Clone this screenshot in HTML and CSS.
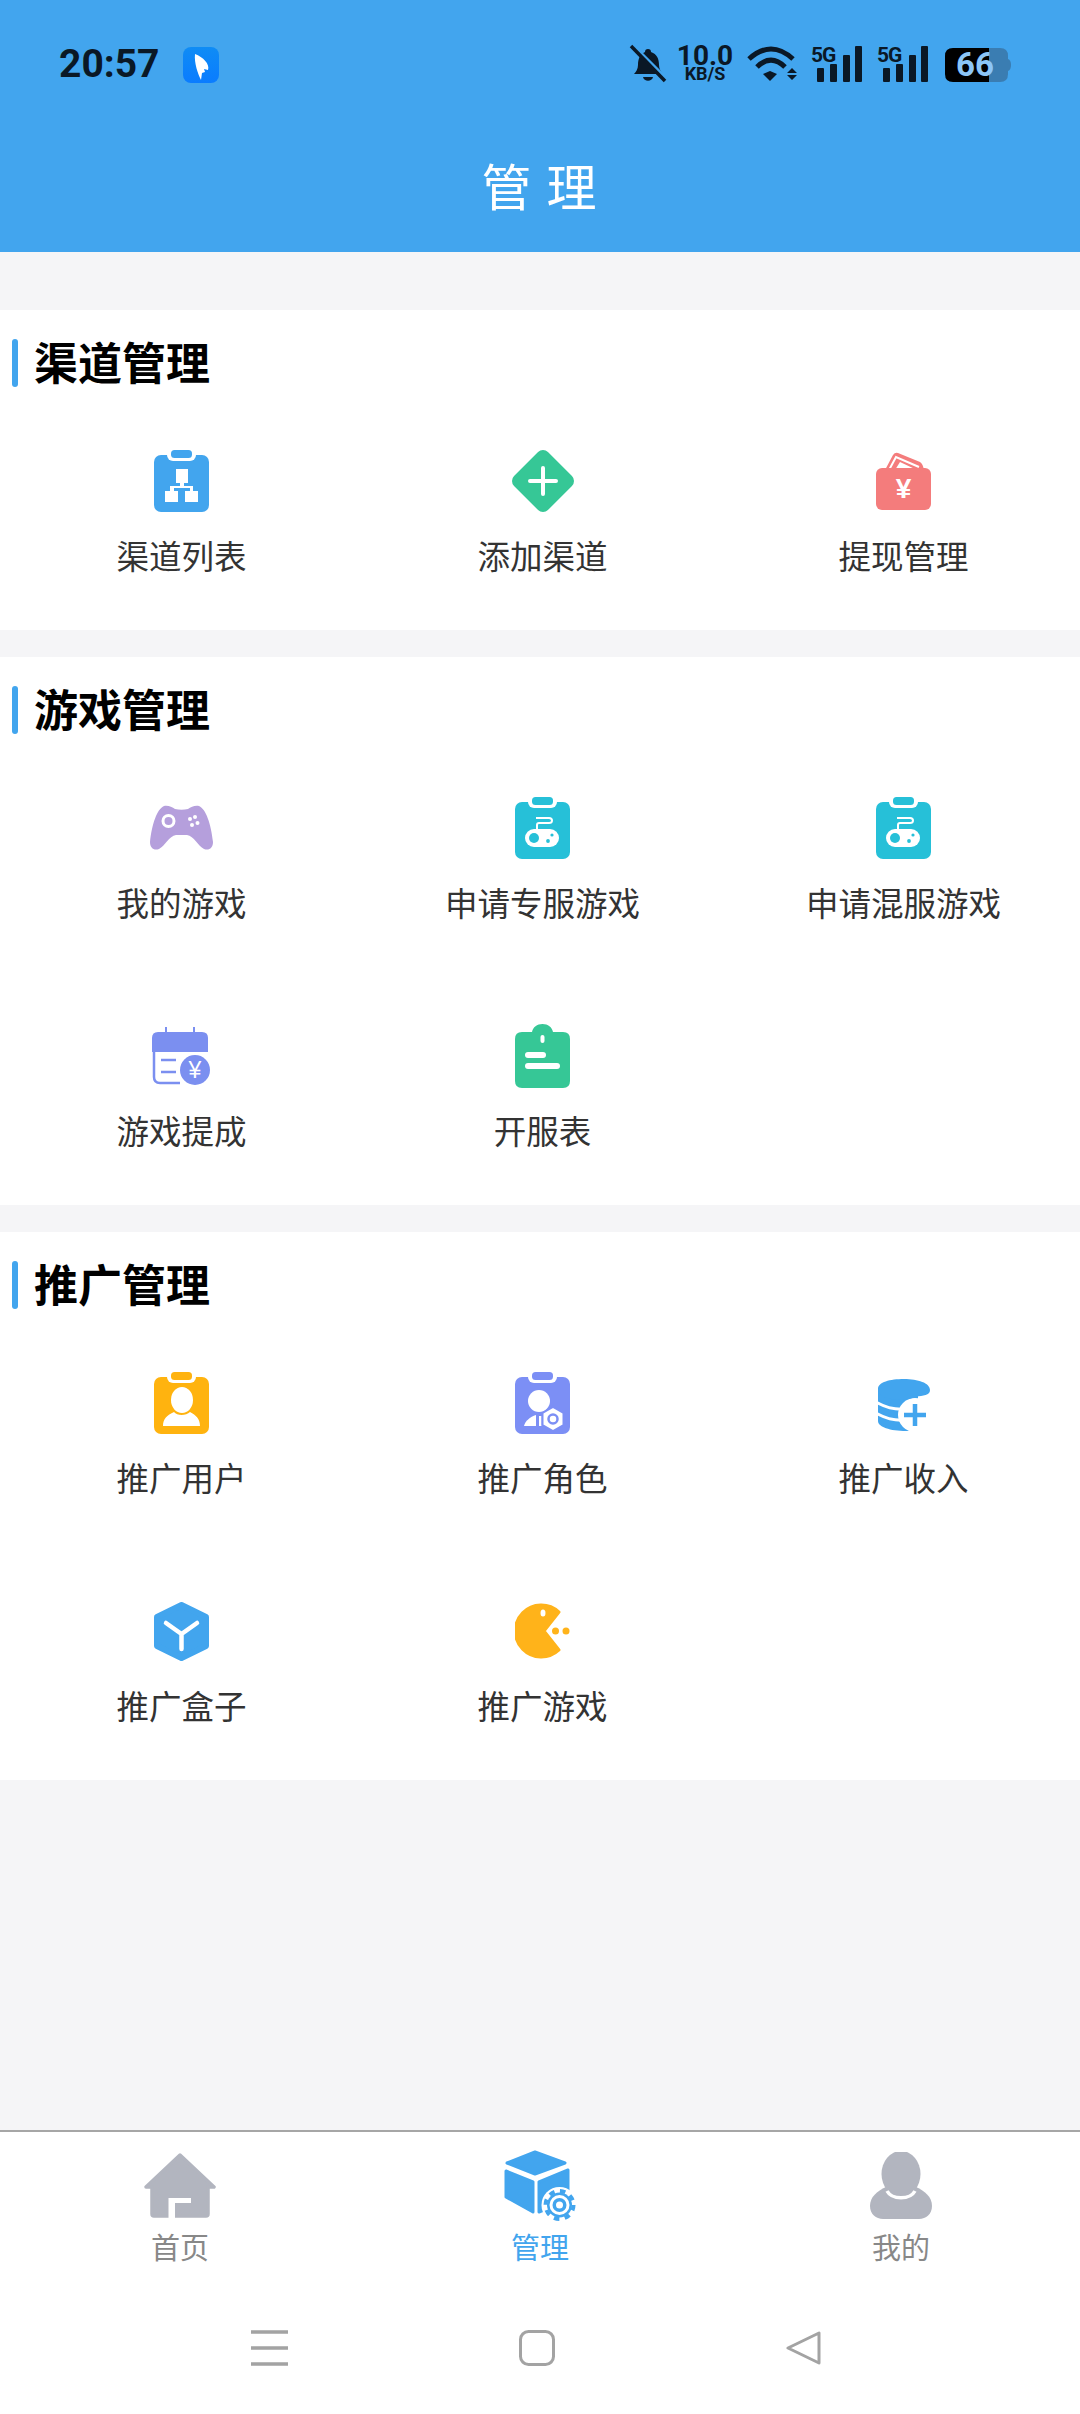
FILE: index.html
```html
<!DOCTYPE html>
<html lang="zh-CN">
<head>
    <meta charset="UTF-8">
    <meta name="viewport" content="width=device-width, initial-scale=1.0">
    <title>管理</title>
    <link rel="stylesheet" href="styles.css">
</head>
<body>
    <svg class="defs" width="0" height="0">
        <symbol id="clip" viewBox="0 0 55 62">
            <rect x="0" y="5" width="55" height="57" rx="7" fill="currentColor"/>
            <rect x="13" y="-3" width="29" height="14" rx="6" fill="#fff"/>
            <rect x="17" y="0" width="21" height="8" rx="3.5" fill="currentColor"/>
        </symbol>
        <symbol id="clip-pad" viewBox="0 0 55 62">
            <use href="#clip" width="55" height="62"/>
            <rect x="10" y="32" width="34" height="18" rx="9" fill="#fff"/>
            <circle cx="19" cy="41" r="5" fill="currentColor"/>
            <circle cx="37" cy="38" r="1.6" fill="currentColor"/>
            <circle cx="33" cy="44" r="1.9" fill="currentColor"/>
            <path d="M22 33V28Q22 26 24 26H34Q37 26 37 23.5Q37 21 34 21H21" fill="none" stroke="#fff" stroke-width="2"/>
        </symbol>
        <symbol id="bars" viewBox="0 0 51 37">
            <rect x="6" y="22" width="7" height="14" rx="1"/>
            <rect x="19" y="18" width="7" height="18" rx="1"/>
            <rect x="32" y="9" width="7" height="27" rx="1"/>
            <rect x="44" y="0" width="7" height="36" rx="1"/>
        </symbol>
    </svg>

    <header class="header">
        <div class="status">
            <div class="status-left">
                <span class="time">20:57</span>
                <svg class="app-icon" width="36" height="36" viewBox="0 0 36 36">
                    <defs>
                        <linearGradient id="appBlue" x1="0" y1="0" x2="0" y2="1">
                            <stop offset="0" stop-color="#0f8cf5"/>
                            <stop offset="1" stop-color="#0a7cff"/>
                        </linearGradient>
                    </defs>
                    <rect width="36" height="36" rx="8" fill="url(#appBlue)"/>
                    <path d="M12 7C20 10 27 17 25 23L21 22L22 25L19 26L18 33C15 27 11 16 12 7Z" fill="#fff"/>
                </svg>
            </div>
            <div class="status-right">
                <svg class="st-bell" width="36" height="36" viewBox="0 0 36 36">
                    <path d="M18 3C20 3 21 4 21 6C27 8 29 13 29 19C29 23 31 26 33 28H4C6 26 8 23 8 19C8 13 10 8 15 6C15 4 16 3 18 3Z" fill="#0a1826"/>
                    <path d="M13 31H23C22 36 14 36 13 31Z" fill="#0a1826"/>
                    <path d="M3 -1L38 34" stroke="#42a5ee" stroke-width="3"/>
                    <path d="M1 0L35 35" stroke="#0a1826" stroke-width="3.5"/>
                </svg>
                <div class="st-net">
                    <span class="net-num">10.0</span>
                    <span class="net-unit">KB/S</span>
                </div>
                <svg class="st-wifi" width="50" height="36" viewBox="0 0 50 36">
                    <g fill="none" stroke="#0a1826" stroke-width="5">
                        <path d="M2 13Q24 -7 46 13"/>
                        <path d="M10 21Q24 7 38 21"/>
                    </g>
                    <path d="M16 28L23 25L30 28L23 35Z" fill="#0a1826"/>
                    <path d="M40 27L45 22L50 27ZM40 29H50L45 34Z" fill="#0a1826"/>
                </svg>
                <svg class="st-sig" width="51" height="37">
                    <text x="0" y="16" class="sig-text">5G</text>
                    <use href="#bars" width="51" height="37"/>
                </svg>
                <svg class="st-sig2" width="51" height="37">
                    <text x="0" y="16" class="sig-text">5G</text>
                    <use href="#bars" width="51" height="37"/>
                </svg>
                <svg class="st-batt" width="66" height="34" viewBox="0 0 66 34">
                    <path d="M40 0H55Q63 0 63 8V26Q63 34 55 34H40Z" fill="#3a7db2"/>
                    <path d="M63 11Q66 12 66 17Q66 22 63 23Z" fill="#3a7db2"/>
                    <path d="M8 0H44V34H8Q0 34 0 26V8Q0 0 8 0Z" fill="#000"/>
                    <text x="30" y="28" class="batt-text">66</text>
                </svg>
            </div>
        </div>
        <h1 class="title">管理</h1>
    </header>

    <main class="main">
        <!-- 渠道管理 -->
        <section class="section first">
            <h2 class="section-head">渠道管理</h2>
            <div class="grid">
                <a class="item">
                    <span class="slot">
                        <svg class="c-blue" width="55" height="62"><use href="#clip" width="55" height="62"/>
                            <path d="M22 19H34V33H30V36H39V41H44V52H31V41H36V38H20V41H24V52H11V41H16V36H26V33H22Z" fill="#fff"/>
                        </svg>
                    </span>
                    <span class="label">渠道列表</span>
                </a>
                <a class="item">
                    <span class="slot">
                        <svg width="62" height="62" viewBox="0 0 62 62">
                            <path d="M31 7L55 31L31 55L7 31Z" fill="#36c796" stroke="#36c796" stroke-width="14" stroke-linejoin="round"/>
                            <path d="M31 18V44M18 31H44" stroke="#fff" stroke-width="4" stroke-linecap="round"/>
                        </svg>
                    </span>
                    <span class="label">添加渠道</span>
                </a>
                <a class="item">
                    <span class="slot">
                        <svg width="55" height="58" viewBox="0 0 55 58">
                            <path d="M9 18L17 3Q19 0 22 1L44 10Q47 12 48 18Z" fill="#f47c7c"/>
                            <path d="M13 18L20 5L43 15" fill="none" stroke="#fff" stroke-width="2"/>
                            <path d="M19 18L24 10L41 18Z" fill="#fff"/>
                            <rect x="0" y="16" width="55" height="42" rx="6" fill="#f47c7c"/>
                            <text x="27.5" y="46" class="yen">¥</text>
                        </svg>
                    </span>
                    <span class="label">提现管理</span>
                </a>
            </div>
        </section>

        <!-- 游戏管理 -->
        <section class="section">
            <h2 class="section-head">游戏管理</h2>
            <div class="grid">
                <a class="item">
                    <span class="slot">
                        <svg width="63" height="46" viewBox="0 0 63 46">
                            <path d="M14 1C18 0 22 2 25 4C29 5 34 5 38 4C41 2 45 0 49 1C56 4 61 19 63 37C63 43 59 46 54 44C48 41 44 31 37 30H26C19 31 15 41 9 44C4 46 0 43 0 37C2 19 7 4 14 1Z" fill="#b59fdc"/>
                            <circle cx="18.5" cy="16" r="5.5" fill="none" stroke="#fff" stroke-width="3"/>
                            <circle cx="40" cy="14" r="2" fill="#fff"/>
                            <circle cx="45" cy="12" r="2" fill="#fff"/>
                            <circle cx="42" cy="20" r="2" fill="#fff"/>
                            <circle cx="47.5" cy="18" r="2" fill="#fff"/>
                        </svg>
                    </span>
                    <span class="label">我的游戏</span>
                </a>
                <a class="item">
                    <span class="slot"><svg class="c-teal" width="55" height="62"><use href="#clip-pad" width="55" height="62"/></svg></span>
                    <span class="label">申请专服游戏</span>
                </a>
                <a class="item">
                    <span class="slot"><svg class="c-teal" width="55" height="62"><use href="#clip-pad" width="55" height="62"/></svg></span>
                    <span class="label">申请混服游戏</span>
                </a>
                <a class="item">
                    <span class="slot">
                        <svg width="60" height="58" viewBox="0 0 60 58">
                            <path d="M14 0V6M42 0V6" stroke="#7b8ff0" stroke-width="2"/>
                            <path d="M6 5H50Q56 5 56 11V25H0V11Q0 5 6 5Z" fill="#7b8ff0"/>
                            <path d="M2 25V50Q2 56 8 56H28" fill="none" stroke="#7b8ff0" stroke-width="2.5"/>
                            <path d="M9 33H24M9 45H24" stroke="#7b8ff0" stroke-width="2.5"/>
                            <circle cx="43" cy="43" r="15" fill="#7b8ff0"/>
                            <text x="43" y="51" class="yen small">¥</text>
                        </svg>
                    </span>
                    <span class="label">游戏提成</span>
                </a>
                <a class="item">
                    <span class="slot">
                        <svg width="55" height="64" viewBox="0 0 55 64">
                            <path d="M7 8H17C18 3 22 0 27.5 0C33 0 37 3 38 8H48Q55 8 55 15V57Q55 64 48 64H7Q0 64 0 57V15Q0 8 7 8Z" fill="#36c796"/>
                            <rect x="25.5" y="11" width="4" height="8" rx="2" fill="#fff"/>
                            <rect x="10" y="28" width="21" height="6" rx="3" fill="#fff"/>
                            <rect x="10" y="39" width="35" height="6" rx="3" fill="#fff"/>
                        </svg>
                    </span>
                    <span class="label">开服表</span>
                </a>
            </div>
        </section>

        <!-- 推广管理 -->
        <section class="section">
            <h2 class="section-head">推广管理</h2>
            <div class="grid">
                <a class="item">
                    <span class="slot">
                        <svg class="c-orange" width="55" height="62"><use href="#clip" width="55" height="62"/>
                            <ellipse cx="28" cy="28" rx="11" ry="13" fill="#fff"/>
                            <path d="M9 54C9 47 13 43 20 40C23 44 32 44 36 40C42 43 46 47 46 54Z" fill="#fff"/>
                        </svg>
                    </span>
                    <span class="label">推广用户</span>
                </a>
                <a class="item">
                    <span class="slot">
                        <svg class="c-purple" width="55" height="62"><use href="#clip" width="55" height="62"/>
                            <circle cx="24" cy="29" r="11" fill="#fff"/>
                            <path d="M9 54C10 49 15 45 21 43V54Z" fill="#fff"/>
                            <rect x="24" y="44" width="2.5" height="10" fill="#fff"/>
                            <path d="M38 35L48.5 41V53L38 59L27.5 53V41Z" fill="#fff" stroke="#7c8ff5" stroke-width="2"/>
                            <circle cx="38" cy="47" r="4.5" fill="#fff" stroke="#7c8ff5" stroke-width="2.5"/>
                        </svg>
                    </span>
                    <span class="label">推广角色</span>
                </a>
                <a class="item">
                    <span class="slot">
                        <svg width="52" height="56" viewBox="0 -4 52 56">
                            <path d="M0 10V42C0 48 12 52 28 52H40V10Z" fill="#42a5ee"/>
                            <path d="M-2 23Q18 35 42 27M-2 34Q18 46 42 38" fill="none" stroke="#fff" stroke-width="3"/>
                            <circle cx="37" cy="36" r="17" fill="#fff"/>
                            <path d="M0 10C0 3 12 0 26 0C40 0 52 4 52 11C52 17 45 16 38 18C32 20 28 21 24 21C10 21 0 17 0 10Z" fill="#42a5ee"/>
                            <path d="M37 25V47M26 36H48" stroke="#42a5ee" stroke-width="4.5"/>
                        </svg>
                    </span>
                    <span class="label">推广收入</span>
                </a>
                <a class="item">
                    <span class="slot">
                        <svg width="55" height="59" viewBox="0 0 55 59">
                            <path d="M27.5 3L52 15V44L27.5 56L3 44V15Z" fill="#42a5ee" stroke="#42a5ee" stroke-width="6" stroke-linejoin="round"/>
                            <path d="M12 21L27.5 32L43 21M27.5 32V47" fill="none" stroke="#fff" stroke-width="4.5" stroke-linecap="round" stroke-linejoin="round"/>
                        </svg>
                    </span>
                    <span class="label">推广盒子</span>
                </a>
                <a class="item">
                    <span class="slot">
                        <svg width="56" height="56" viewBox="0 0 56 56">
                            <path d="M29 28L44 9A26 26 0 1 0 44 47Z" fill="#ffb31a" stroke="#ffb31a" stroke-width="3" stroke-linejoin="round"/>
                            <ellipse cx="28" cy="10" rx="2.5" ry="3.5" fill="#fff"/>
                            <circle cx="40.5" cy="28" r="3.5" fill="#ffb31a"/>
                            <circle cx="51" cy="28" r="3.5" fill="#ffb31a"/>
                        </svg>
                    </span>
                    <span class="label">推广游戏</span>
                </a>
            </div>
        </section>
    </main>

    <nav class="tabbar">
        <a class="tab">
            <span class="tab-slot">
                <svg width="72" height="65" viewBox="0 0 72 65">
                    <path d="M36 2L70 34H64V61Q64 63 62 63H10Q8 63 8 61V34H2Z" fill="#b2b5bf" stroke="#b2b5bf" stroke-width="3.5" stroke-linejoin="round"/>
                    <path d="M24.5 65V45H47V50H31V65Z" fill="#fff"/>
                </svg>
            </span>
            <span class="tab-label">首页</span>
        </a>
        <a class="tab active">
            <span class="tab-slot">
                <svg width="74" height="71" viewBox="0 0 74 71">
                    <g fill="#42a5ee" stroke="#42a5ee" stroke-width="3" stroke-linejoin="round">
                        <path d="M4 13L32 2L62 13L32 24Z"/>
                        <path d="M3 21L30 32V62L3 47Z"/>
                        <path d="M36 32L65 20V50L36 62Z"/>
                    </g>
                    <circle cx="56.5" cy="55" r="18" fill="#fff"/>
                    <circle cx="56.5" cy="55" r="12.5" fill="#42a5ee"/>
                    <circle cx="56.5" cy="55" r="14" fill="none" stroke="#42a5ee" stroke-width="4" stroke-dasharray="5.5 5.5"/>
                    <circle cx="56.5" cy="55" r="10" fill="#fff"/>
                    <circle cx="56.5" cy="55" r="7" fill="#42a5ee"/>
                    <circle cx="56.5" cy="55" r="3.5" fill="#fff"/>
                </svg>
            </span>
            <span class="tab-label">管理</span>
        </a>
        <a class="tab">
            <span class="tab-slot">
                <svg width="62" height="67" viewBox="0 0 62 67">
                    <path d="M0 54C0 45 7 39 16 35H46C55 39 62 45 62 54C62 62 56 67 49 67H13C6 67 0 62 0 54Z" fill="#b2b5bf"/>
                    <ellipse cx="31" cy="22" rx="19.5" ry="23" fill="#b2b5bf"/>
                    <path d="M17 39C22 48 40 48 45 39" fill="none" stroke="#fff" stroke-width="3.5"/>
                </svg>
            </span>
            <span class="tab-label">我的</span>
        </a>
    </nav>

    <div class="navbar">
        <svg width="37" height="36" viewBox="0 0 37 36">
            <path d="M0 2H37M0 18H37M0 34H37" stroke="#a3a3a3" stroke-width="3.5"/>
        </svg>
        <svg width="36" height="36" viewBox="0 0 36 36">
            <rect x="1.5" y="1.5" width="33" height="33" rx="8" fill="none" stroke="#a3a3a3" stroke-width="3"/>
        </svg>
        <svg width="35" height="36" viewBox="0 0 35 36">
            <path d="M33 3V33L2 18Z" fill="none" stroke="#a3a3a3" stroke-width="3" stroke-linejoin="round"/>
        </svg>
    </div>
</body>
</html>
```

FILE: styles.css
```css
* {
    box-sizing: border-box;
}
html, body {
    margin: 0;
    padding: 0;
}
body {
    width: 1080px;
    height: 2414px;
    display: flex;
    flex-direction: column;
    overflow: hidden;
    background: #fff;
    font-family: "Noto Sans CJK SC", "Noto Sans", sans-serif;
}
.defs {
    position: absolute;
}

/* header */
.header {
    height: 252px;
    background: #42a5ee;
    flex: none;
}
.status {
    height: 152px;
    padding: 46px 69px 0 59px;
    display: flex;
    justify-content: space-between;
    align-items: flex-start;
    color: #0a1826;
}
.status-left {
    display: flex;
    align-items: center;
    height: 37px;
}
.time {
    font-family: Roboto, sans-serif;
    font-weight: 700;
    font-size: 39px;
    line-height: 37px;
}
.app-icon {
    margin-left: 23px;
    margin-top: 1px;
}
.status-right {
    display: flex;
    align-items: flex-start;
    fill: #0a1826;
}
.status-right svg {
    overflow: visible;
}
.st-net {
    margin-left: 12px;
    width: 54px;
    display: flex;
    flex-direction: column;
    align-items: center;
    font-family: Roboto, sans-serif;
    font-weight: 700;
}
.net-num {
    font-size: 28px;
    line-height: 20px;
}
.net-unit {
    font-size: 18px;
    line-height: 15px;
}
.st-wifi {
    margin-left: 15px;
}
.st-sig {
    margin-left: 14px;
}
.st-sig2 {
    margin-left: 15px;
}
.st-batt {
    margin-left: 17px;
    margin-top: 2px;
}
.sig-text {
    font-family: Roboto, sans-serif;
    font-weight: 700;
    font-size: 21px;
    letter-spacing: -1px;
}
.batt-text {
    font-family: Roboto, sans-serif;
    font-weight: 700;
    font-size: 33px;
    fill: #8cc6f7;
    text-anchor: middle;
}
.title {
    margin: 0;
    text-align: center;
    color: #fff;
    font-weight: 400;
    font-size: 50px;
    line-height: 64px;
    letter-spacing: 15px;
    text-indent: 13px;
}

/* sections */
.main {
    flex: 1;
    background: #f5f5f7;
    padding-top: 58px;
}
.section {
    background: #fff;
    margin-top: 27px;
    overflow: hidden;
}
.section.first {
    margin-top: 0;
}
.section-head {
    margin: 0;
    height: 92px;
    padding: 29px 0 0 12px;
    display: flex;
    gap: 16px;
    font-size: 44px;
    line-height: 44px;
    font-weight: 700;
    color: #000;
}
.section-head::before {
    content: "";
    width: 6px;
    height: 48px;
    border-radius: 3px;
    background: #42a5ee;
}
.grid {
    display: grid;
    grid-template-columns: repeat(3, 361px);
    grid-auto-rows: 228px;
    padding-left: 1px;
}
.item {
    display: flex;
    flex-direction: column;
    align-items: center;
    padding-top: 47px;
}
.slot {
    height: 64px;
    display: flex;
    align-items: center;
    justify-content: center;
}
.label {
    margin-top: 22px;
    font-size: 32.5px;
    line-height: 40px;
    color: #333;
}
.yen {
    font-family: "Liberation Sans", sans-serif;
    font-weight: 700;
    font-size: 28px;
    fill: #fff;
    text-anchor: middle;
}
.yen.small {
    font-weight: 400;
    font-size: 23px;
}
.c-blue {
    color: #42a5ee;
}
.c-teal {
    color: #26c0d8;
}
.c-orange {
    color: #ffb30f;
}
.c-purple {
    color: #7c8ff5;
}

/* bottom tabs */
.tabbar {
    flex: none;
    height: 150px;
    border-top: 2px solid #a6a6a6;
    padding-top: 17px;
    display: grid;
    grid-template-columns: 360px 360px 362px;
}
.tab {
    display: flex;
    flex-direction: column;
    align-items: center;
}
.tab-slot {
    height: 72px;
    display: flex;
    align-items: center;
    justify-content: center;
}
.tab-label {
    margin-top: 7px;
    font-size: 29px;
    line-height: 36px;
    color: #888;
}
.tab.active .tab-label {
    color: #42a5ee;
}

/* system nav */
.navbar {
    flex: none;
    height: 134px;
    padding: 50px 8px 0 0;
    display: flex;
    justify-content: center;
    align-items: flex-start;
    gap: 231px;
}
```
